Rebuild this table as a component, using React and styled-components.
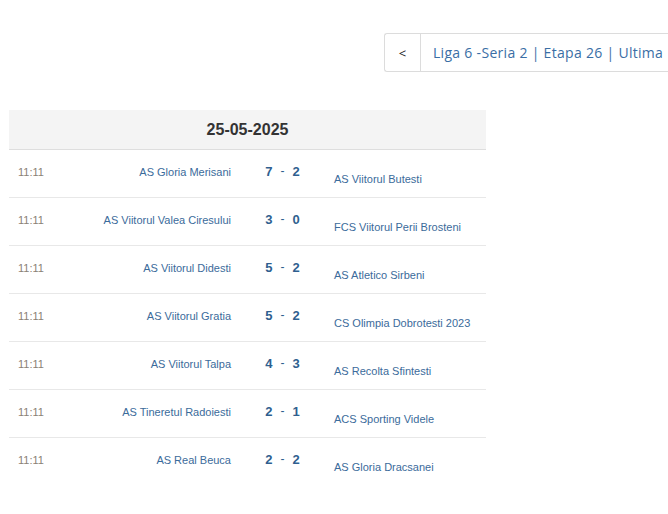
import React from 'react';
import styled, {createGlobalStyle} from 'styled-components';

const GlobalStyle = createGlobalStyle`
  body {
    margin: 0;
    background: #fff;
    font-family: "Liberation Sans", Arial, sans-serif;
    overflow: hidden;
  }
`;

const Page = styled.div`
  width: 668px;
  height: 514px;
  overflow: hidden;
`;

const NavRow = styled.div`
  display: flex;
  padding: 33px 0 0 384px;
  height: 39px;
`;

const NavBox = styled.div`
  display: flex;
  align-items: stretch;
  border: 1px solid #dcdcdc;
  border-right: none;
  border-radius: 3px 0 0 3px;
  height: 37px;
  white-space: nowrap;
  font-family: "Open Sans", sans-serif;
  font-size: 14px;
`;

const BackButton = styled.div`
  width: 35px;
  display: flex;
  align-items: center;
  justify-content: center;
  border-right: 1px solid #dcdcdc;
  color: #222;
  font-size: 13px;
`;

const RoundLabel = styled.div`
  display: flex;
  align-items: center;
  padding: 0 40px 0 12px;
  color: #3a6ea5;
  letter-spacing: 0.3px;
`;

const Table = styled.div`
  margin: 38px 0 0 9px;
  width: 477px;
`;

const DateHeader = styled.div`
  height: 39px;
  background: #f4f4f4;
  border-bottom: 1px solid #dedede;
  display: flex;
  align-items: center;
  justify-content: center;
  font-weight: bold;
  font-size: 16px;
  color: #333;
`;

const MatchRow = styled.div`
  display: grid;
  grid-template-columns: 91px 140px 85px 1fr;
  height: 47px;
  border-bottom: 1px solid ${p => (p.$last ? 'transparent' : '#e8e8e8')};
  font-size: 11px;
`;

const Time = styled.div`
  padding: 16px 0 0 9px;
  color: #8a8175;
`;

const Team = styled.div`
  color: #3b6b9b;
  text-align: ${p => (p.$home ? 'right' : 'left')};
  padding: ${p => (p.$home ? '16px 9px 0 0' : '23px 0 0 9px')};
  white-space: nowrap;
`;

const Score = styled.div`
  display: flex;
  justify-content: center;
  gap: 8px;
  padding-top: 14px;
  color: #2f5f8f;
  font-weight: bold;
  font-size: 13px;
  span:nth-child(2) {
    font-weight: normal;
    font-size: 12px;
  }
`;

const matches = [
  ['AS Gloria Merisani', 7, 2, 'AS Viitorul Butesti'],
  ['AS Viitorul Valea Ciresului', 3, 0, 'FCS Viitorul Perii Brosteni'],
  ['AS Viitorul Didesti', 5, 2, 'AS Atletico Sirbeni'],
  ['AS Viitorul Gratia', 5, 2, 'CS Olimpia Dobrotesti 2023'],
  ['AS Viitorul Talpa', 4, 3, 'AS Recolta Sfintesti'],
  ['AS Tineretul Radoiesti', 2, 1, 'ACS Sporting Videle'],
  ['AS Real Beuca', 2, 2, 'AS Gloria Dracsanei'],
];

export default function App() {
  return (
    <Page>
      <GlobalStyle />
      <NavRow>
        <NavBox>
          <BackButton>&lt;</BackButton>
          <RoundLabel>Liga 6 -Seria 2 | Etapa 26 | Ultima</RoundLabel>
        </NavBox>
      </NavRow>
      <Table>
        <DateHeader>25-05-2025</DateHeader>
        {matches.map(([home, hg, ag, away], i) => (
          <MatchRow key={home} $last={i === matches.length - 1}>
            <Time>11:11</Time>
            <Team $home>{home}</Team>
            <Score>
              <span>{hg}</span>
              <span>-</span>
              <span>{ag}</span>
            </Score>
            <Team>{away}</Team>
          </MatchRow>
        ))}
      </Table>
    </Page>
  );
}
